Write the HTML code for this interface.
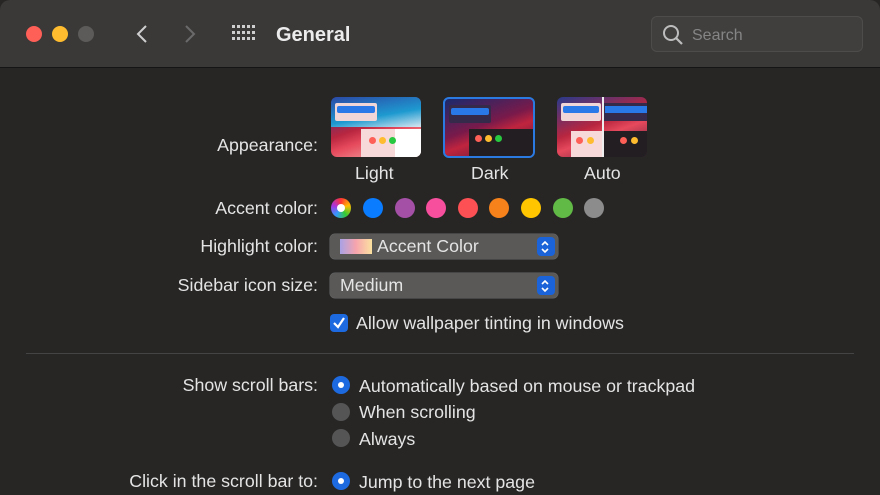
<!DOCTYPE html>
<html><head><style>
*{margin:0;padding:0;box-sizing:border-box}
body{width:880px;height:495px;background:#272625;font-family:"Liberation Sans",sans-serif;color:#e6e6e6;position:relative;overflow:hidden}
.tb{position:absolute;left:0;top:0;width:880px;height:68px;background:#3a3938;border-bottom:1px solid #151515;border-radius:10px 10px 0 0}
.a{position:absolute}
.lbl{position:absolute;right:562px;font-size:17.8px;color:#e4e4e4;white-space:nowrap;margin-top:-1px}
.dot{position:absolute;width:20px;height:20px;border-radius:50%;top:198px}
.txt{position:absolute;font-size:17.8px;white-space:nowrap;color:#e4e4e4;margin-top:-1px}
.pop{position:absolute;left:330px;width:228px;height:25px;background:#5a5958;border-radius:5px;box-shadow:0 0 0 .5px #666}
.step{position:absolute;right:3px;top:3px;width:18px;height:19px;background:#1b63d8;border-radius:4px}
.rad{position:absolute;left:332px;width:18px;height:18px;border-radius:50%}
.on{background:#1d6ae0}.on:after{content:"";position:absolute;left:6px;top:6px;width:6px;height:6px;border-radius:50%;background:#fff}
.off{background:#555}
.th{position:absolute;top:97px;width:90px;height:60px;border-radius:6px;overflow:hidden}
</style></head><body>
<div class="tb"></div>
<div class="a" style="left:26px;top:26px;width:16px;height:16px;border-radius:50%;background:#fe5f57"></div>
<div class="a" style="left:52px;top:26px;width:16px;height:16px;border-radius:50%;background:#febc2e"></div>
<div class="a" style="left:78px;top:26px;width:16px;height:16px;border-radius:50%;background:#5c5b5a"></div>
<svg class="a" style="left:134px;top:24px" width="16" height="20"><path d="M12 2 L4 10 L12 18" stroke="#cfcfcf" stroke-width="2" fill="none"/></svg>
<svg class="a" style="left:182px;top:24px" width="16" height="20"><path d="M4 2 L12 10 L4 18" stroke="#6a6a6a" stroke-width="2" fill="none"/></svg>
<svg class="a" style="left:232px;top:25px" width="26" height="18">
<g fill="#cfcfcf"><rect x="0" y="0" width="3" height="3"/><rect x="5" y="0" width="3" height="3"/><rect x="10" y="0" width="3" height="3"/><rect x="15" y="0" width="3" height="3"/><rect x="20" y="0" width="3" height="3"/>
<rect x="0" y="6" width="3" height="3"/><rect x="5" y="6" width="3" height="3"/><rect x="10" y="6" width="3" height="3"/><rect x="15" y="6" width="3" height="3"/><rect x="20" y="6" width="3" height="3"/>
<rect x="0" y="12" width="3" height="3"/><rect x="5" y="12" width="3" height="3"/><rect x="10" y="12" width="3" height="3"/><rect x="15" y="12" width="3" height="3"/><rect x="20" y="12" width="3" height="3"/></g></svg>
<div class="txt" style="left:276px;top:25px;font-size:20px;font-weight:bold;color:#ececec">General</div>
<div class="a" style="left:651px;top:16px;width:212px;height:36px;border-radius:6px;background:#403f3e;border:1px solid #4d4c4b"></div>
<svg class="a" style="left:662px;top:24px" width="24" height="22"><circle cx="9" cy="9" r="7" stroke="#bdbdbd" stroke-width="2" fill="none"/><path d="M14 14 L20 20" stroke="#bdbdbd" stroke-width="2.2"/></svg>
<div class="txt" style="left:692px;top:28px;font-size:16px;color:#858585">Search</div>

<div class="lbl" style="top:136px">Appearance:</div>
<div class="th" style="left:331px;background:linear-gradient(160deg,#283a8c 0%,#b8263f 45%,#e6495c 60%,#f3c4b8 100%)">
 <div class="a" style="left:0;top:0;width:90px;height:30px;background:linear-gradient(170deg,#2b49a6,#1e9ad0 60%,#d8e7f0)"></div>
 <div class="a" style="left:4px;top:6px;width:42px;height:18px;background:#f0d6d6;border-radius:2px"></div>
 <div class="a" style="left:6px;top:9px;width:38px;height:7px;background:#2a79e8;border-radius:2px"></div>
 <div class="a" style="left:30px;top:32px;width:60px;height:28px;background:#f7d9d9"></div>
 <div class="a" style="left:64px;top:32px;width:26px;height:28px;background:#fff"></div>
 <div class="a" style="left:38px;top:40px;width:7px;height:7px;border-radius:50%;background:#fe5f57"></div>
 <div class="a" style="left:48px;top:40px;width:7px;height:7px;border-radius:50%;background:#febc2e"></div>
 <div class="a" style="left:58px;top:40px;width:7px;height:7px;border-radius:50%;background:#28c840"></div>
</div>
<div class="th" style="left:443px;width:92px;height:61px;border:2px solid #2a7ae2;background:linear-gradient(160deg,#1a2a6c 0%,#7a1a4a 45%,#c0243e 60%,#4a1a3a 100%)">
 <div class="a" style="left:4px;top:6px;width:42px;height:18px;background:#352a4a;border-radius:2px"></div>
 <div class="a" style="left:6px;top:9px;width:38px;height:7px;background:#2a79e8;border-radius:2px"></div>
 <div class="a" style="left:24px;top:30px;width:66px;height:28px;background:#221e22"></div>
 <div class="a" style="left:30px;top:36px;width:7px;height:7px;border-radius:50%;background:#fe5f57"></div>
 <div class="a" style="left:40px;top:36px;width:7px;height:7px;border-radius:50%;background:#febc2e"></div>
 <div class="a" style="left:50px;top:36px;width:7px;height:7px;border-radius:50%;background:#28c840"></div>
</div>
<div class="th" style="left:557px;background:linear-gradient(160deg,#283a8c 0%,#b8263f 45%,#e6495c 60%,#4a1a3a 100%)">
 <div class="a" style="left:4px;top:6px;width:40px;height:18px;background:#f0d6d6;border-radius:2px"></div>
 <div class="a" style="left:6px;top:9px;width:36px;height:7px;background:#2a79e8;border-radius:2px"></div>
 <div class="a" style="left:46px;top:6px;width:44px;height:18px;background:#352a4a"></div>
 <div class="a" style="left:48px;top:9px;width:42px;height:7px;background:#2a79e8"></div>
 <div class="a" style="left:45px;top:0;width:2px;height:60px;background:#eee"></div>
 <div class="a" style="left:14px;top:34px;width:31px;height:26px;background:#f7d9d9"></div>
 <div class="a" style="left:47px;top:34px;width:43px;height:26px;background:#221e22"></div>
 <div class="a" style="left:19px;top:40px;width:7px;height:7px;border-radius:50%;background:#fe5f57"></div>
 <div class="a" style="left:30px;top:40px;width:7px;height:7px;border-radius:50%;background:#febc2e"></div>
 <div class="a" style="left:63px;top:40px;width:7px;height:7px;border-radius:50%;background:#fe5f57"></div>
 <div class="a" style="left:74px;top:40px;width:7px;height:7px;border-radius:50%;background:#febc2e"></div>
</div>
<div class="txt" style="left:355px;top:164px">Light</div>
<div class="txt" style="left:471px;top:164px">Dark</div>
<div class="txt" style="left:584px;top:164px">Auto</div>

<div class="lbl" style="top:199px">Accent color:</div>
<div class="dot" style="left:331px;background:conic-gradient(#f33,#fb0,#3c3,#39f,#a3d,#f33)"></div>
<div class="a" style="left:337px;top:204px;width:8px;height:8px;border-radius:50%;background:#fff"></div>
<div class="dot" style="left:363px;background:#0a7cff"></div>
<div class="dot" style="left:395px;background:#a550a7"></div>
<div class="dot" style="left:426px;background:#f74f9e"></div>
<div class="dot" style="left:458px;background:#fc5055"></div>
<div class="dot" style="left:489px;background:#f7821b"></div>
<div class="dot" style="left:521px;background:#ffc600"></div>
<div class="dot" style="left:553px;background:#62ba46"></div>
<div class="dot" style="left:584px;background:#8c8c8c"></div>

<div class="lbl" style="top:237px">Highlight color:</div>
<div class="pop" style="top:234px"><div class="a" style="left:10px;top:5px;width:32px;height:15px;background:linear-gradient(90deg,#a9a2e6,#f7a4ad,#fbe2a0)"></div><div class="txt" style="left:47px;top:3px">Accent Color</div><div class="step"></div></div>
<svg class="a" style="left:539px;top:239px" width="12" height="16"><path d="M3 6 L6 3 L9 6 M3 10 L6 13 L9 10" stroke="#fff" stroke-width="1.6" fill="none"/></svg>
<div class="lbl" style="top:276px">Sidebar icon size:</div>
<div class="pop" style="top:273px"><div class="txt" style="left:10px;top:3px">Medium</div><div class="step"></div></div>
<svg class="a" style="left:539px;top:278px" width="12" height="16"><path d="M3 6 L6 3 L9 6 M3 10 L6 13 L9 10" stroke="#fff" stroke-width="1.6" fill="none"/></svg>
<div class="a" style="left:330px;top:314px;width:18px;height:18px;border-radius:4px;background:#1d6ae0"></div>
<svg class="a" style="left:330px;top:314px" width="18" height="18"><path d="M4 9 L8 13 L14 4" stroke="#fff" stroke-width="2.2" fill="none"/></svg>
<div class="txt" style="left:356px;top:314px">Allow wallpaper tinting in windows</div>
<div class="a" style="left:26px;top:353px;width:828px;height:1px;background:#444"></div>

<div class="lbl" style="top:376px">Show scroll bars:</div>
<div class="rad on" style="top:376px"></div><div class="txt" style="left:359px;top:377px">Automatically based on mouse or trackpad</div>
<div class="rad off" style="top:403px"></div><div class="txt" style="left:359px;top:403px">When scrolling</div>
<div class="rad off" style="top:429px"></div><div class="txt" style="left:359px;top:430px">Always</div>
<div class="lbl" style="top:472px">Click in the scroll bar to:</div>
<div class="rad on" style="top:472px"></div><div class="txt" style="left:359px;top:473px">Jump to the next page</div>
</body></html>
